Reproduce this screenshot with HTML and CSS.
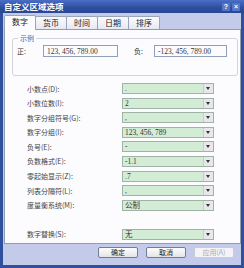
FILE: index.html
```html
<!DOCTYPE html>
<html lang="zh-CN">
<head>
  <meta charset="UTF-8">
  <title>自定义区域选项</title>
  <link rel="stylesheet" href="styles.css">
</head>
<body>

  <div class="window">
    <div class="titlebar">
      <span class="title">自定义区域选项</span>
      <span class="ctrls"><span class="ctrl">?</span><span class="ctrl">×</span></span>
    </div>

    <div class="tabs">
      <div class="tab active">数字</div>
      <div class="tab">货币</div>
      <div class="tab">时间</div>
      <div class="tab">日期</div>
      <div class="tab">排序</div>
    </div>

    <div class="panel">
      <fieldset class="sample">
        <legend>示例</legend>
        <div class="sample-row">
          <span class="sign">正:</span>
          <div class="field">123, 456, 789.00</div>
          <span class="sign neg">负:</span>
          <div class="field">-123, 456, 789.00</div>
        </div>
      </fieldset>

      <div class="opts">
        <div class="opt"><label>小数点(D):</label><div class="combo"><span class="val">.</span><span class="arrow"></span></div></div>
        <div class="opt"><label>小数位数(I):</label><div class="combo"><span class="val">2</span><span class="arrow"></span></div></div>
        <div class="opt"><label>数字分组符号(G):</label><div class="combo"><span class="val">,</span><span class="arrow"></span></div></div>
        <div class="opt"><label>数字分组(I):</label><div class="combo"><span class="val">123, 456, 789</span><span class="arrow"></span></div></div>
        <div class="opt"><label>负号(E):</label><div class="combo"><span class="val">-</span><span class="arrow"></span></div></div>
        <div class="opt"><label>负数格式(E):</label><div class="combo"><span class="val">-1.1</span><span class="arrow"></span></div></div>
        <div class="opt"><label>零起始显示(Z):</label><div class="combo"><span class="val">.7</span><span class="arrow"></span></div></div>
        <div class="opt"><label>列表分隔符(L):</label><div class="combo"><span class="val">,</span><span class="arrow"></span></div></div>
        <div class="opt"><label>度量衡系统(M):</label><div class="combo"><span class="val">公制</span><span class="arrow"></span></div></div>
      </div>

      <div class="opt subst"><label>数字替换(S):</label><div class="combo"><span class="val">无</span><span class="arrow"></span></div></div>
    </div>

    <div class="buttons">
      <button class="btn">确定</button>
      <button class="btn">取消</button>
      <button class="btn off">应用(A)</button>
    </div>
  </div>

</body>
</html>
```

FILE: styles.css
```css
body {
  margin: 0;
  font-family: "Noto Sans CJK SC", "Liberation Sans", sans-serif;
  font-size: 7px;
  color: #333;
}
.window {
  width: 244px;
  height: 268px;
  box-sizing: border-box;
  display: flex;
  flex-direction: column;
  background: #c4cbea;
  border: 3px solid #2f4f9f;
  border-top: 0;
}
.titlebar {
  height: 13px;
  margin: 0 -3px;
  padding: 0 4px;
  display: flex;
  align-items: center;
  justify-content: space-between;
  background: linear-gradient(#4a6fc8, #2d4d9f 60%, #2a4890);
  color: #fff;
}
.title {
  font-size: 8.5px;
  font-weight: bold;
  line-height: 1;
}
.ctrls {
  display: flex;
  gap: 2px;
}
.ctrl {
  width: 8px;
  height: 8px;
  line-height: 8px;
  text-align: center;
  font-family: "Liberation Sans", sans-serif;
  font-size: 7px;
  font-weight: bold;
  background: #5476c8;
  border-radius: 1px;
}
.tabs {
  display: flex;
  align-items: flex-end;
  height: 16px;
  padding-left: 1px;
}
.tab {
  height: 12px;
  line-height: 12px;
  padding: 0 7px;
  font-size: 8px;
  color: #222;
  background: linear-gradient(#fbfbfd, #e6e9f2);
  border: 1px solid #9aa4ba;
  border-bottom: 0;
  border-radius: 2px 2px 0 0;
  margin-right: -1px;
}
.tab.active {
  height: 14px;
  padding: 0 7px;
  background: #fcfcfe;
  position: relative;
  margin-bottom: -1px;
  z-index: 1;
}
.panel {
  width: 237px;
  height: 215px;
  margin-left: 1px;
  box-sizing: border-box;
  padding: 4px 3px 0 7px;
  background: #fcfcfe;
  border: 1px solid #8f9cb2;
}
.sample {
  margin: 0;
  width: 226px;
  height: 42px;
  box-sizing: border-box;
  padding: 2px 4px 0 4px;
  border: 1px solid #d2d4dc;
  border-radius: 3px;
}
.sample legend {
  padding: 0 2px;
  margin-left: 1px;
  line-height: 9px;
  color: #4a62b0;
}
.sample-row {
  display: flex;
  align-items: center;
  height: 12px;
}
.sign {
  width: 26px;
}
.sign.neg {
  width: 20px;
  margin-left: 16px;
}
.field {
  width: 75px;
  height: 12px;
  line-height: 12px;
  box-sizing: border-box;
  padding-left: 3px;
  border: 1px solid #8fa0b8;
  font-family: "Liberation Serif", serif;
  font-size: 7.5px;
}
.field + .sign + .field {
  width: 73px;
}
.opts {
  margin-top: 7px;
  display: flex;
  flex-direction: column;
  gap: 3.6px;
}
.opt {
  display: grid;
  grid-template-columns: 95px 92px;
  padding-left: 15px;
  height: 11px;
  align-items: center;
}
.opt label {
  color: #444;
}
.opt.subst {
  margin-top: 18px;
}
.combo {
  height: 11px;
  display: flex;
  box-sizing: border-box;
  border: 1px solid #9fb3a6;
  background: #d3ecd6;
}
.val {
  flex: 1;
  padding-left: 2px;
  line-height: 9px;
  font-family: "Liberation Serif", "Noto Sans CJK SC", serif;
  font-size: 7.5px;
}
.arrow {
  width: 9px;
  background: #e8e8ea;
  border-left: 1px solid #c6ccd2;
  position: relative;
}
.arrow::after {
  content: "";
  position: absolute;
  left: 2px;
  top: 3px;
  border: 2.5px solid transparent;
  border-top: 3px solid #333;
  border-bottom: 0;
}
.buttons {
  display: flex;
  justify-content: flex-end;
  gap: 8px;
  margin-top: 3px;
  padding-right: 7px;
}
.btn {
  width: 40px;
  height: 11px;
  padding: 0;
  font-family: inherit;
  font-size: 7px;
  line-height: 9px;
  color: #222;
  background: linear-gradient(#fdfdfd, #e4e4e8);
  border: 1px solid #6f7f94;
  border-radius: 2px;
}
.btn.off {
  color: #a8acb8;
  border-color: #c8ccd8;
  background: #f4f4f6;
}
```
